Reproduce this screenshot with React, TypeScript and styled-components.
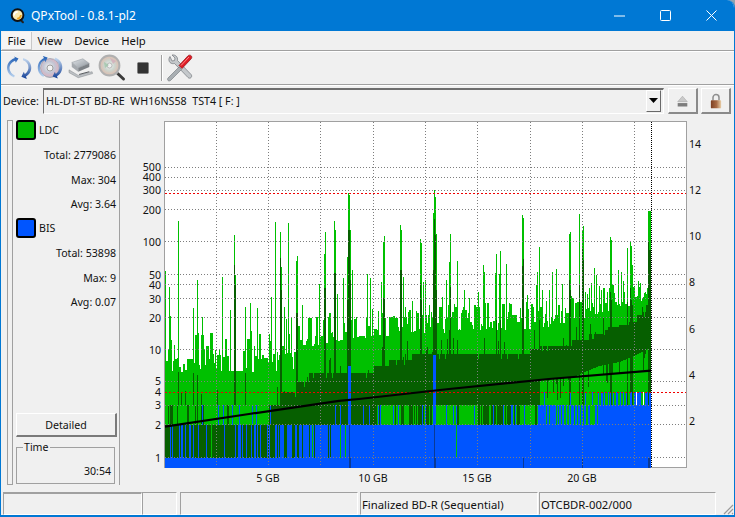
import React from "react";
import styled, { createGlobalStyle } from "styled-components";

const FONT = `"Noto Sans", "Open Sans", sans-serif`;

const Global = createGlobalStyle`
  html, body { margin: 0; padding: 0; background: #8fa3b0; }
  #root { width: 735px; height: 517px; overflow: hidden; }
  * { box-sizing: border-box; }
`;

const Window = styled.div`
  width: 735px;
  height: 517px;
  display: flex;
  flex-direction: column;
  background: #f0f0f0;
  border-style: solid;
  border-color: #0078d4;
  border-width: 0 1px 2px 1px;
  border-top-right-radius: 8px;
  overflow: hidden;
  position: relative;
  font-family: ${FONT};
  color: #111;
`;
const TitleBar = styled.div`
  height: 31px;
  flex: none;
  background: #0078d4;
  display: flex;
  align-items: center;
  padding-left: 9px;
  color: #fff;
`;
const TitleText = styled.span`
  font-size: 12px;
  margin-left: 5px;
  flex: 1;
`;
const WinButton = styled.div`
  width: 46px;
  height: 31px;
  display: flex;
  align-items: center;
  justify-content: center;
`;
const MenuBar = styled.div`
  height: 20px;
  flex: none;
  display: flex;
  align-items: stretch;
  padding: 1px 0 0 1px;
  border-bottom: 1px solid #a0a0a0;
  box-shadow: 0 1px 0 #fff;
  font-size: 11.3px;
`;
const MenuItem = styled.div<{ $active?: boolean }>`
  height: 18px;
  display: flex;
  align-items: center;
  padding: 0 5.5px;
  background: ${(p) => (p.$active ? "#f5f5f5" : "transparent")};
  border-right: 1px solid ${(p) => (p.$active ? "#c8c8c8" : "transparent")};
  border-bottom: 1px solid ${(p) => (p.$active ? "#c8c8c8" : "transparent")};
`;
const Toolbar = styled.div`
  height: 33px;
  margin-top: 1px;
  flex: none;
  display: flex;
  align-items: center;
  padding-left: 2px;
  border-bottom: 1px solid #a0a0a0;
  box-shadow: 0 1px 0 #fff;
`;
const ToolIcon = styled.div`
  width: 31px;
  height: 32px;
  display: flex;
  align-items: center;
  justify-content: center;
`;
const ToolSep = styled.div`
  width: 1px;
  height: 26px;
  background: #a0a0a0;
  margin: 0 2px 0 3px;
  box-shadow: 1px 0 0 #fff;
`;
const DeviceRow = styled.div`
  height: 31px;
  flex: none;
  display: flex;
  align-items: flex-start;
  padding: 3px 0 0 2px;
  font-size: 10.7px;
`;
const DeviceLabel = styled.div`
  width: 40px;
  height: 26px;
  display: flex;
  align-items: center;
`;
const Combo = styled.div`
  width: 621px;
  height: 26px;
  display: flex;
  align-items: center;
  justify-content: space-between;
  border: 1px solid;
  border-width: 2px 1px 1px 1px;
  border-color: #6e6e6e #fff #fff #6e6e6e;
  padding: 0 2px 2px 2px;
  white-space: pre;
`;
const ComboArrow = styled.div`
  width: 15px;
  height: 22px;
  background: #f0f0f0;
  border: 1px solid;
  border-color: #fff #696969 #696969 #fff;
  display: flex;
  align-items: center;
  justify-content: center;
`;
const SquareButton = styled.div<{ $gap: number }>`
  width: 30px;
  height: 26px;
  margin-left: ${(p) => p.$gap}px;
  border: 1px solid;
  border-width: 1px 2px 2px 1px;
  border-color: #fff #8a8a8a #8a8a8a #fff;
  display: flex;
  align-items: center;
  justify-content: center;
`;
const Main = styled.div`
  flex: 1;
  min-height: 0;
  display: flex;
`;
const SideRail = styled.div`
  width: 6px;
  margin: 4px 0 7px 6px;
  border: 1px solid #a0a0a0;
  flex: none;
`;
const SidePanel = styled.div`
  width: 107px;
  margin: 4px 0 7px 0;
  flex: none;
  display: flex;
  flex-direction: column;
  padding: 0 0 1px 3px;
  border-right: 1px solid #a0a0a0;
  font-size: 10.6px;
`;
const LegendHead = styled.div<{ $gap: number }>`
  height: 20px;
  margin-top: ${(p) => p.$gap}px;
  margin-bottom: 3px;
  display: flex;
  align-items: center;
  gap: 3px;
`;
const Swatch = styled.div<{ $color: string }>`
  width: 20px;
  height: 20px;
  border: 2px solid #000;
  border-radius: 3px;
  background: ${(p) => p.$color};
`;
const StatRow = styled.div`
  height: 24.5px;
  display: flex;
  align-items: center;
  justify-content: flex-end;
  padding-right: 3px;
`;
const DetailButton = styled.div`
  margin-top: auto;
  width: 101px;
  height: 24px;
  flex: none;
  display: flex;
  align-items: center;
  justify-content: center;
  border: 1px solid;
  border-width: 1px 2px 2px 1px;
  border-color: #fff #7a7a7a #7a7a7a #fff;
`;
const TimeBox = styled.fieldset`
  margin: 4px 0 0 0;
  width: 99px;
  height: 43px;
  flex: none;
  border: 1px solid #a0a0a0;
  padding: 0 3px 0 0;
`;
const TimeLegend = styled.legend`
  margin-left: 6px;
  padding: 0 1px;
  font-size: 10.6px;
  line-height: 12px;
`;
const TimeValue = styled.div`
  margin-top: 11px;
  text-align: right;
  line-height: 14px;
`;
const ChartSvg = styled.svg`
  display: block;
  width: 613px;
  height: 376px;
  flex: none;
  font-family: ${FONT};
  font-size: 10.6px;
`;
const StatusBar = styled.div`
  height: 23px;
  flex: none;
  display: flex;
  padding-left: 2px;
  font-size: 11.3px;
`;
const StatusCell = styled.div<{ $w: number; $gap?: number; $thick?: boolean }>`
  width: ${(p) => p.$w}px;
  margin-left: ${(p) => p.$gap ?? 0}px;
  flex: none;
  display: flex;
  align-items: center;
  padding-left: 1px;
  padding-top: 1px;
  border: 1px solid;
  border-width: ${(p) => (p.$thick ? 2 : 1)}px 1px 1px 1px;
  border-color: #a0a0a0 #fff #fff #a0a0a0;
`;
const Grip = styled.svg`
  position: absolute;
  right: 0;
  bottom: 0;
  width: 14px;
  height: 14px;
`;

/* ----- chart data ----- */
function rng(seed: number) {
  return () => {
    seed |= 0;
    seed = (seed + 0x6d2b79f5) | 0;
    let t = Math.imul(seed ^ (seed >>> 15), 1 | seed);
    t = (t + Math.imul(t ^ (t >>> 7), 61 | t)) ^ t;
    return ((t ^ (t >>> 14)) >>> 0) / 4294967296;
  };
}
const lerp = (pts: number[][], x: number) => {
  if (x <= pts[0][0]) return pts[0][1];
  for (let i = 1; i < pts.length; i++) {
    if (x <= pts[i][0]) {
      const [a, b] = pts[i - 1];
      const [c, d] = pts[i];
      return b + ((d - b) * (x - a)) / (c - a);
    }
  }
  return pts[pts.length - 1][1];
};
const step = (pts: number[][], x: number) => {
  let v = 999;
  for (const [a, b] of pts) if (x >= a) v = b;
  return v;
};

const spikes: Record<number, [number, number?]> = {
  166: [271], 170: [287], 171: [316], 179: [221, 372], 194: [308, 373], 198: [280, 375], 203: [317], 223: [277], 231: [310],
  235: [235, 265], 236: [275, 285], 246: [307, 373], 251: [303], 258: [308], 272: [297], 276: [222], 281: [232, 258], 282: [267, 290],
  285: [307], 287: [319], 289: [223], 292: [317], 297: [261, 313], 298: [256, 313], 303: [305], 320: [284], 325: [254, 288],
  326: [232, 288], 335: [221, 273], 336: [230, 273], 338: [294], 344: [278], 348: [257, 300], 349: [193, 230], 350: [195, 230],
  351: [230, 280], 353: [270], 368: [274], 371: [278], 382: [282], 384: [242, 298], 385: [236, 298], 401: [225, 270], 402: [230, 270],
  404: [277], 406: [307], 413: [301], 421: [239, 283], 422: [243, 300], 424: [282], 426: [280], 430: [305], 434: [213, 270],
  435: [190, 219], 436: [197, 235], 437: [234, 290], 443: [297], 447: [280], 450: [262, 330], 451: [234, 287], 458: [261, 340],
  465: [290], 470: [298], 477: [307], 479: [292], 484: [265], 485: [272], 496: [273], 497: [254, 320], 500: [274], 501: [251, 320],
  507: [264], 510: [303], 523: [215, 266], 524: [218, 259], 528: [295], 537: [285], 538: [272], 540: [247, 320], 543: [290],
  550: [290], 553: [272], 557: [269], 563: [284], 570: [234, 280], 571: [232, 290], 573: [298], 580: [214, 284], 583: [230, 248],
  584: [226, 260], 590: [288], 592: [283], 595: [268], 597: [275], 602: [290], 611: [237, 292], 612: [240, 300], 619: [270],
  622: [272], 624: [281], 628: [248, 302], 631: [241, 288], 632: [246, 300], 633: [265, 305], 639: [281], 649: [211, 242], 650: [211, 250], 651: [211, 250],
};

const wedgeTop = [
  [283, 392], [297, 382], [310, 373], [375, 366], [390, 360], [413, 354], [531, 349], [540, 346], [573, 340], [590, 334], [605, 330],
  [609, 327], [620, 325], [630, 322], [638, 315], [643, 312], [647, 305],
];
const wedgeBottom = [[540, 380], [573, 377], [600, 366], [620, 362], [635, 356], [650, 348]];
const topBase = [[297, 340], [340, 332], [400, 326], [540, 320], [590, 308], [640, 294], [651, 285]];

const colors = ["", "#00c000", "#065f00", "#0055ff", "#0a3a96", "#ffffff"];

type Bar = { x: number; y: number; h: number; c: number };

function buildBars() {
  const r = rng(20240611);
  const bars: Bar[] = [];
  let prev = 0;
  for (let x = 166; x <= 651; x++) {
    const col = new Uint8Array(468);
    const fill = (a: number, b: number, c: number) => {
      for (let y = Math.max(0, Math.round(a)); y < Math.min(468, Math.round(b)); y++) col[y] = c;
    };
    const rand = r();
    const sticky = r() < 0.4 ? prev : rand;
    prev = sticky;
    const s = spikes[x];

    let top: number;
    if (x < 297) top = 372 - Math.pow(sticky, 1.2) * 42;
    else top = lerp(topBase, x) + 9 - Math.pow(sticky, 1.6) * 30;
    if (s) top = Math.min(top, s[0]);
    fill(top, 405, 1);

    if (x >= 283) {
      let dt = step(wedgeTop, x);
      const db = x < 540 ? 405 : lerp(wedgeBottom, x);
      const k = r();
      if (k < 0.05) dt += 5;
      if (k > 0.92) dt -= r() * 20;
      fill(dt, db, 2);
      if (x >= 540 && r() < 0.22) fill(db, db + r() * 22, 2);
    } else if (r() < 0.04) {
      fill(385 + r() * 10, 405, 2);
    }
    if (s && s[1]) fill(s[1], 405, 2);

    if (x >= 540) {
      const p = x > 630 ? 0.55 : x > 600 ? 0.3 : 0.12;
      if (r() < p) fill(392, 405, 3);
      if (x === 637 || x === 644) fill(392, 405, 5);
    }

    const z2 = r();
    let c2 = 1;
    if (x < 270) c2 = z2 < 0.06 ? 3 : z2 < 0.18 ? 2 : 1;
    else if (x < 373) c2 = z2 < 0.05 ? 3 : 2;
    else if (x < 540) {
      const run = Math.sin(x * 0.23) + Math.sin(x * 0.07 + 1);
      c2 = z2 < 0.14 ? 3 : run > 0.1 ? 1 : z2 < 0.7 ? 2 : 1;
      if (x > 470 && z2 < 0.22) c2 = 3;
    } else if (x < 600) c2 = z2 < 0.3 ? 1 : 3;
    else c2 = 3;
    fill(405, 425, c2);

    const z3 = r();
    let c3 = 3;
    if (x < 270) c3 = z3 < 0.18 ? 3 : 2;
    else if (x < 300) c3 = z3 < 0.5 ? 3 : 2;
    else if (x < 340) c3 = z3 < 0.78 ? 3 : 2;
    if (x === 212 || x === 341 || x === 346 || x === 457 || x === 313) c3 = 1;
    fill(425, 458, c3);
    fill(458, 468, 3);

    if (x >= 349 && x <= 351) fill(366, 425, 3);
    if (x >= 434 && x <= 436) fill(355, 425, 3);
    if (x === 350 || x === 351 || x === 435 || x === 436 || x === 524 || x === 583 || x === 649 || x === 650) fill(458, 468, 4);
    if (x === 350 || x === 435) fill(425, 458, 4);

    let y = 0;
    while (y < 468) {
      const c = col[y];
      let e = y + 1;
      while (e < 468 && col[e] === c) e++;
      if (c) bars.push({ x, y, h: e - y, c });
      y = e;
    }
  }
  return bars;
}
const bars = buildBars();

const leftAxis: [string, number, number][] = [
  ["500", 167, 167], ["400", 177, 177], ["300", 190, 190], ["200", 209, 210], ["100", 241, 242], ["50", 274, 275], ["40", 284, 285],
  ["30", 298, 299], ["20", 317, 318], ["10", 349, 350], ["5", 381.5, 381], ["4", 392, 392], ["3", 405.5, 405], ["2", 424.5, 425], ["1", 457.5, 458],
];
const rightAxis: [string, number][] = [["14", 144], ["12", 190], ["10", 236], ["8", 282], ["6", 329], ["4", 375], ["2", 421]];
const xGrid = [217.5, 269.5, 321.5, 374.5, 426.5, 478.5, 531.5, 583.5, 635.5];
const xLabels: [string, number][] = [["5 GB", 269], ["10 GB", 374], ["15 GB", 478], ["20 GB", 583]];

const Chart = () => (
  <ChartSvg viewBox="121 116 613 376" fill="#111">
    <rect x="165.5" y="121.5" width="522" height="346" fill="#fff" stroke="#a0a0a0" />
    <g shapeRendering="crispEdges">
      {bars.map((b) => (
        <rect key={`${b.x}-${b.y}`} x={b.x} y={b.y} width="1" height={b.h} fill={colors[b.c]} />
      ))}
      {leftAxis
        .filter(([t]) => t !== "4")
        .map(([t, y]) => (
          <line key={t} x1="166" x2="687" y1={Math.floor(y) + 0.5} y2={Math.floor(y) + 0.5} stroke="#7d7d7d" strokeDasharray="1 2" />
        ))}
      {xGrid.map((x) => (
        <line key={x} x1={x} x2={x} y1="122" y2="467" stroke="#7d7d7d" strokeDasharray="1 2" />
      ))}
      <line x1="166" x2="687" y1="193.5" y2="193.5" stroke="#f00000" strokeDasharray="2 2" />
      <line x1="166" x2="687" y1="392.5" y2="392.5" stroke="#f00000" strokeDasharray="2 2" />
      <line x1="652.5" x2="652.5" y1="122" y2="467" stroke="#000" strokeDasharray="1 1" />
    </g>
    <polyline points="166,426.7 250,414 340,400.8 360,399 450,389 550,379 652,370.7" fill="none" stroke="#000" strokeWidth="2.2" />
    {leftAxis.map(([t, , ly]) => (
      <text key={t} x="162" y={ly + 4} textAnchor="end">
        {t}
      </text>
    ))}
    {rightAxis.map(([t, y]) => (
      <text key={t} x="690" y={y + 4}>
        {t}
      </text>
    ))}
    {xLabels.map(([t, x]) => (
      <text key={t} x={x} y="482" textAnchor="middle">
        {t}
      </text>
    ))}
  </ChartSvg>
);

/* ----- icons ----- */
const QLogo = () => (
  <svg width="16" height="17" viewBox="0 0 18 18">
    <path d="M11 13l3.500 3.500" stroke="#222" strokeWidth="2.400" strokeLinecap="round" />
    <circle cx="8.500" cy="8.500" r="6.600" fill="#fbe9b0" stroke="#111" strokeWidth="2.200" />
    <path d="M4.600 9a4 4 0 0 1 4-4" stroke="#fff" strokeWidth="2" fill="none" />
    <path d="M8 12.400a4 4 0 0 0 4.200-4" stroke="#e9a21a" strokeWidth="2" fill="none" />
  </svg>
);
const Refresh = () => (
  <svg width="30" height="30" viewBox="0 0 30 30">
    <defs>
      <linearGradient id="arcL" x1="0" y1="0" x2="0" y2="1">
        <stop offset="0" stopColor="#1d5cb4" />
        <stop offset="1" stopColor="#bcd5f0" />
      </linearGradient>
      <linearGradient id="arcR" x1="0" y1="0" x2="0" y2="1">
        <stop offset="0" stopColor="#c8dcf2" />
        <stop offset="1" stopColor="#123f96" />
      </linearGradient>
    </defs>
    <path d="M11 5C5 7 2.500 11.500 3.200 16.500c.5 3.500 2.800 6.500 6.800 8l.8-2C7.800 21 5.900 18.500 5.600 16c-.4-3.500 1.500-6.500 5.400-8.200l.8 2L14.500 5.500 10 3.500z" fill="url(#arcL)" />
    <path d="M19 5c6 1.500 8.800 6 8.200 11-.4 3.200-2.200 5.800-5.200 7.400l.8 2.600-5.400-2.200 2.400-5 1 2.300c2-1.300 3.300-3.500 3.600-5.600.5-3.800-1.500-7-5.400-8.300z" fill="url(#arcR)" />
  </svg>
);
const DiscRefresh = () => (
  <svg width="30" height="30" viewBox="0 0 30 30">
    <defs>
      <radialGradient id="disc" cx="0.45" cy="0.45" r="0.6">
        <stop offset="0" stopColor="#f2f2f2" />
        <stop offset="0.5" stopColor="#c3c6d4" />
        <stop offset="0.75" stopColor="#d5b7c4" />
        <stop offset="1" stopColor="#9fb4c4" />
      </radialGradient>
    </defs>
    <circle cx="15" cy="15" r="9.500" fill="url(#disc)" stroke="#8d8f99" strokeWidth=".6" />
    <circle cx="15" cy="15" r="3" fill="#f3f3f3" stroke="#8a8a8a" strokeWidth=".8" />
    <path d="M9 5C4 7.500 2 12 3 17c.6 3 2.500 5.500 5.500 7l.7-1.800C7 21 5.500 18.500 5 16c-.5-3.400 1-7 4.500-8.700l1 2L12.600 4.500 7.800 3z" fill="url(#arcL)" />
    <path d="M20 4.500c5 1.800 7.800 6 7.200 11-.4 3.200-2.200 6-5.200 7.700l.8 2.300-5.200-2 2.300-4.700.9 2.200c2-1.300 3.300-3.500 3.600-5.700.5-3.800-1.500-7-5-8.400z" fill="url(#arcR)" />
  </svg>
);
const Drive = () => (
  <svg width="28" height="24" viewBox="0 0 30 26">
    <defs>
      <linearGradient id="drv" x1="0" y1="0" x2="1" y2="1">
        <stop offset="0" stopColor="#e0e4e8" />
        <stop offset="1" stopColor="#8d949b" />
      </linearGradient>
    </defs>
    <path d="M5 7l12-4 7 5-12 5z" fill="url(#drv)" stroke="#8a9096" strokeWidth=".5" />
    <path d="M5 7v5l7 5v-4z" fill="#a4a9ae" />
    <path d="M12 13l12-5v4l-12 5z" fill="#7c8186" />
    <path d="M2 15l10 6 15-4 .6 2-15.600 4.500L2 18z" fill="#bcc0c4" stroke="#7c8084" strokeWidth=".5" />
    <path d="M13 20l11-3" stroke="#4b4f54" strokeWidth="1" />
  </svg>
);
const Magnifier = () => (
  <svg width="30" height="30" viewBox="0 0 30 30">
    <defs>
      <radialGradient id="lens" cx="0.5" cy="0.5" r="0.55">
        <stop offset="0" stopColor="#f4f4f4" />
        <stop offset="0.45" stopColor="#ccd6cf" />
        <stop offset="0.75" stopColor="#d8c4b8" />
        <stop offset="1" stopColor="#a8a8a8" />
      </radialGradient>
    </defs>
    <path d="M18 18l8.500 8" stroke="#3b3b3b" strokeWidth="3" strokeLinecap="round" />
    <path d="M17.500 17.500l3 3" stroke="#b9b9b9" strokeWidth="3.400" />
    <circle cx="12.500" cy="12.500" r="10" fill="url(#lens)" stroke="#b0b0b0" strokeWidth="1.800" />
    <circle cx="12.500" cy="12.500" r="2.500" fill="#f0f0f0" stroke="#9a9a9a" strokeWidth=".6" />
    <path d="M7 9l5 3-4 3z" fill="#8fbf9c" opacity=".6" />
    <path d="M13 5l3 6 3-3z" fill="#d5a0b4" opacity=".6" />
  </svg>
);
const Stop = () => (
  <svg width="14" height="14" viewBox="0 0 14 14">
    <rect x="1.500" y="1.500" width="11" height="11" rx="1" fill="#333" stroke="#777" strokeWidth=".6" />
  </svg>
);
const Tools = () => (
  <svg width="27" height="28" viewBox="0 0 27 28">
    <path d="M4 2.500c-1.500 1.800-1.500 4.500 0 6 1.400 1.200 3 1.400 4.500 1l13.500 14c.8.900 2.400.9 3.100 0 .8-.8.700-2.200 0-3L11.500 6.500c.3-1.800-.2-3.500-1.500-4.500C8.800 1 7.500.8 6 1l3 3-.5 2.500L6 7z" fill="#c4c8cb" stroke="#72777c" strokeWidth=".7" />
    <path d="M2 24l11-11 2.500 2.500-11 11c-.7.600-1.800.600-2.500 0-.6-.7-.6-1.800 0-2.500z" fill="#a8aeb2" stroke="#6f7478" strokeWidth=".6" />
    <path d="M13 11.500L22 1.800c.8-.9 2.300-.9 3.200 0 .8.900.8 2.200 0 3L16 14.500z" fill="#e01b24" stroke="#8e1118" strokeWidth=".7" />
    <path d="M15 11.500l8-8.500" stroke="#ff8a8a" strokeWidth="1" />
  </svg>
);
const Eject = () => (
  <svg width="11" height="12" viewBox="0 0 16 16">
    <path d="M8 1l7 8H1z" fill="#c9c9c9" stroke="#9a9a9a" strokeWidth=".7" />
    <rect x="1" y="11" width="14" height="5" fill="#7d7d7d" />
  </svg>
);
const Lock = () => (
  <svg width="12" height="16" viewBox="0 0 14 18">
    <defs>
      <linearGradient id="brass" x1="0" y1="0" x2="1" y2="0">
        <stop offset="0" stopColor="#7d3f22" />
        <stop offset="0.55" stopColor="#a86a44" />
        <stop offset="1" stopColor="#e9cfa8" />
      </linearGradient>
    </defs>
    <path d="M3.500 8V5a3.500 3.500 0 0 1 7 0v3" fill="none" stroke="#8f8f8f" strokeWidth="1.800" />
    <rect x="1" y="8" width="12" height="9.500" rx="1" fill="url(#brass)" />
  </svg>
);

const statsLdc = ["Total: 2779086", "Max: 304", "Avg: 3.64"];
const statsBis = ["Total: 53898", "Max: 9", "Avg: 0.07"];

export default function App() {
  return (
    <>
      <Global />
      <Window>
        <TitleBar>
          <QLogo />
          <TitleText>QPxTool - 0.8.1-pl2</TitleText>
          <WinButton>
            <svg width="11" height="2" viewBox="0 0 11 2"><path d="M0 1h11" stroke="#fff" /></svg>
          </WinButton>
          <WinButton>
            <svg width="11" height="11" viewBox="0 0 11 11"><rect x=".5" y=".5" width="10" height="10" rx="1" fill="none" stroke="#fff" /></svg>
          </WinButton>
          <WinButton>
            <svg width="11" height="11" viewBox="0 0 11 11"><path d="M.5.5l10 10M10.500.5l-10 10" stroke="#fff" /></svg>
          </WinButton>
        </TitleBar>
        <MenuBar>
          <MenuItem $active>File</MenuItem>
          <MenuItem>View</MenuItem>
          <MenuItem>Device</MenuItem>
          <MenuItem>Help</MenuItem>
        </MenuBar>
        <Toolbar>
          <ToolIcon><Refresh /></ToolIcon>
          <ToolIcon><DiscRefresh /></ToolIcon>
          <ToolIcon><Drive /></ToolIcon>
          <ToolIcon><Magnifier /></ToolIcon>
          <ToolIcon><Stop /></ToolIcon>
          <ToolSep />
          <ToolIcon><Tools /></ToolIcon>
        </Toolbar>
        <DeviceRow>
          <DeviceLabel>Device:</DeviceLabel>
          <Combo>
            <span>HL-DT-ST BD-RE  WH16NS58  TST4 [ F: ]</span>
            <ComboArrow>
              <svg width="9" height="5" viewBox="0 0 9 5"><path d="M0 0h9L4.500 5z" fill="#000" /></svg>
            </ComboArrow>
          </Combo>
          <SquareButton $gap={4}><Eject /></SquareButton>
          <SquareButton $gap={3}><Lock /></SquareButton>
        </DeviceRow>
        <Main>
          <SideRail />
          <SidePanel>
            <LegendHead $gap={0}>
              <Swatch $color="#00b800" />
              LDC
            </LegendHead>
            {statsLdc.map((s) => <StatRow key={s}>{s}</StatRow>)}
            <LegendHead $gap={1.5}>
              <Swatch $color="#0055ff" />
              BIS
            </LegendHead>
            {statsBis.map((s) => <StatRow key={s}>{s}</StatRow>)}
            <DetailButton>Detailed</DetailButton>
            <TimeBox>
              <TimeLegend>Time</TimeLegend>
              <TimeValue>30:54</TimeValue>
            </TimeBox>
          </SidePanel>
          <Chart />
        </Main>
        <StatusBar>
          <StatusCell $w={139} $thick />
          <StatusCell $w={35} />
          <StatusCell $w={178} $gap={3} />
          <StatusCell $w={178} $gap={2}>Finalized BD-R (Sequential)</StatusCell>
          <StatusCell $w={177} $gap={1}>OTCBDR-002/000</StatusCell>
        </StatusBar>
        <Grip viewBox="0 0 14 14">
          <path d="M13 4L4 13M13 8l-5 5M13 12l-1 1" stroke="#9a9a9a" strokeWidth="1.200" fill="none" />
        </Grip>
      </Window>
    </>
  );
}
